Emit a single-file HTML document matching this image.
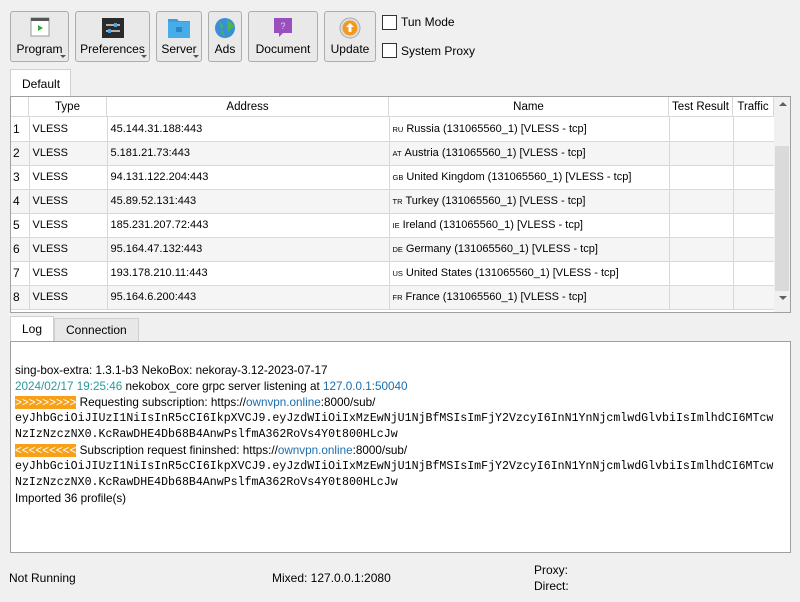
<!DOCTYPE html><html><head><style>
*{box-sizing:border-box;margin:0;padding:0}
body{width:800px;height:602px;background:#f0f0f0;font-family:"Liberation Sans",sans-serif;font-size:12px;color:#000;position:relative;overflow:hidden}
.a{position:absolute}
.btn{position:absolute;top:11px;height:51px;border:1px solid #adadad;border-radius:3px;background:#e9e9e9;text-align:center}
.btn .l{position:absolute;bottom:5px;left:0;right:0;font-size:12px}
.btn .ic{position:absolute;top:5px;left:50%;margin-left:-12px;width:24px;height:22px}
.dd{position:absolute;right:2px;bottom:3px;border-left:3px solid transparent;border-right:3px solid transparent;border-top:3px solid #555;width:0;height:0}
.cb{position:absolute;left:382px;width:15px;height:15px;border:1px solid #333;background:#fff}
table{border-collapse:collapse;table-layout:fixed}
td{height:24px;border-right:1px solid #d8d8d8;border-bottom:1px solid #d8d8d8;padding-left:3px;white-space:nowrap;overflow:hidden;font-size:11px}
td.n{padding-left:2px;font-size:12px}
tr:nth-child(even) td{background:#f5f5f5}
.cc{font-size:7.5px;margin-right:3px}
.hdr{position:absolute;top:97px;height:20px;border-right:1px solid #d8d8d8;border-bottom:1px solid #d8d8d8;text-align:center;line-height:20px;background:#fff;font-size:11.5px;white-space:nowrap;overflow:hidden}
.log div{height:16px;line-height:16px;white-space:nowrap;font-size:11.7px}
.log div.mono{font-family:"Liberation Mono",monospace;font-size:11.6px}
.bl{color:#1a6fb0}.tl{color:#2a9a9a}
.or{background:#f7a11a;color:#fff}
</style></head><body>
<div class="btn" style="left:10px;width:59px"><svg class="ic" viewBox="0 0 24 22"><rect x="3" y="1" width="18" height="18" fill="#fff" stroke="#999"/><rect x="3" y="1" width="18" height="3" fill="#555"/><path d="M10 8l5 3-5 3z" fill="#3a3"/></svg><div class="l">Program</div><div class="dd"></div></div>
<div class="btn" style="left:75px;width:75px"><svg class="ic" viewBox="0 0 24 22"><rect x="1" y="1" width="22" height="20" fill="#2b2b2b"/><path d="M5 8h14M5 14h14" stroke="#fff" stroke-width="1.2"/><rect x="13" y="6" width="3" height="4" fill="#4aa3df"/><rect x="7" y="12" width="3" height="4" fill="#4aa3df"/></svg><div class="l">Preferences</div><div class="dd"></div></div>
<div class="btn" style="left:156px;width:46px"><svg class="ic" viewBox="0 0 24 22"><path d="M1 2h9l2 2h11v17H1z" fill="#3a9ee0"/><rect x="1" y="5" width="22" height="16" fill="#47ade8"/><rect x="9" y="10" width="6" height="5" fill="#2a86c7"/></svg><div class="l">Server</div><div class="dd"></div></div>
<div class="btn" style="left:208px;width:34px"><svg class="ic" viewBox="0 0 24 22"><circle cx="12" cy="11" r="10" fill="#3a8fd6"/><path d="M6 5c3 1 5 4 3 7s1 6 3 8M14 2c2 3 6 4 7 8-3 1-5 3-6 6" fill="#4cb848"/></svg><div class="l">Ads</div></div>
<div class="btn" style="left:248px;width:70px"><svg class="ic" viewBox="0 0 24 22"><path d="M3 1h18v15H12l-4 4v-4H3z" fill="#9b4fbf"/><text x="12" y="12" font-size="9" fill="#ddd" text-anchor="middle" font-family="Liberation Sans">?</text></svg><div class="l">Document</div></div>
<div class="btn" style="left:324px;width:52px"><svg class="ic" viewBox="0 0 24 22"><circle cx="12" cy="11" r="10" fill="#ddd" stroke="#aaa"/><circle cx="12" cy="11" r="7.5" fill="#f39a1e"/><path d="M12 6l-4 4h2.5v5h3v-5H16z" fill="#fff"/></svg><div class="l">Update</div></div>
<div class="cb" style="top:15px"></div><div class="a" style="left:401px;top:15px;font-size:12px">Tun Mode</div>
<div class="cb" style="top:43px"></div><div class="a" style="left:401px;top:44px;font-size:12px">System Proxy</div>

<div class="a" style="left:10px;top:69px;width:61px;height:28px;border:1px solid #d0d0d0;border-bottom:none;background:#fff;padding:7px 0 0 11px">Default</div>
<div class="a" style="left:10px;top:96px;width:781px;height:217px;border:1px solid #a0a0a0;background:#fff"></div>
<div class="hdr" style="left:11px;width:18px"></div>
<div class="hdr" style="left:29px;width:78px">Type</div>
<div class="hdr" style="left:107px;width:282px">Address</div>
<div class="hdr" style="left:389px;width:280px">Name</div>
<div class="hdr" style="left:669px;width:64px">Test Result</div>
<div class="hdr" style="left:733px;width:41px">Traffic</div>
<table class="a" style="left:11px;top:117px;width:763px">
<colgroup><col style="width:18px"><col style="width:78px"><col style="width:282px"><col style="width:280px"><col style="width:64px"><col style="width:41px"></colgroup>
<tr><td class="n">1</td><td>VLESS</td><td>45.144.31.188:443</td><td><span class="cc">RU</span>Russia (131065560_1) [VLESS - tcp]</td><td></td><td></td></tr>
<tr><td class="n">2</td><td>VLESS</td><td>5.181.21.73:443</td><td><span class="cc">AT</span>Austria (131065560_1) [VLESS - tcp]</td><td></td><td></td></tr>
<tr><td class="n">3</td><td>VLESS</td><td>94.131.122.204:443</td><td><span class="cc">GB</span>United Kingdom (131065560_1) [VLESS - tcp]</td><td></td><td></td></tr>
<tr><td class="n">4</td><td>VLESS</td><td>45.89.52.131:443</td><td><span class="cc">TR</span>Turkey (131065560_1) [VLESS - tcp]</td><td></td><td></td></tr>
<tr><td class="n">5</td><td>VLESS</td><td>185.231.207.72:443</td><td><span class="cc">IE</span>Ireland (131065560_1) [VLESS - tcp]</td><td></td><td></td></tr>
<tr><td class="n">6</td><td>VLESS</td><td>95.164.47.132:443</td><td><span class="cc">DE</span>Germany (131065560_1) [VLESS - tcp]</td><td></td><td></td></tr>
<tr><td class="n">7</td><td>VLESS</td><td>193.178.210.11:443</td><td><span class="cc">US</span>United States (131065560_1) [VLESS - tcp]</td><td></td><td></td></tr>
<tr><td class="n">8</td><td>VLESS</td><td>95.164.6.200:443</td><td><span class="cc">FR</span>France (131065560_1) [VLESS - tcp]</td><td></td><td></td></tr>
</table>
<div class="a" style="left:774px;top:97px;width:16px;height:215px;background:#f0f0f0"></div>
<div class="a" style="left:775px;top:146px;width:14px;height:145px;background:#dadada"></div>
<div class="a" style="left:779px;top:102px;border-left:4px solid transparent;border-right:4px solid transparent;border-bottom:4px solid #606060"></div>
<div class="a" style="left:779px;top:296px;border-left:4px solid transparent;border-right:4px solid transparent;border-top:4px solid #606060"></div>

<div class="a" style="left:10px;top:316px;width:44px;height:26px;border:1px solid #d0d0d0;border-bottom:none;background:#fff;padding:5px 0 0 11px;font-size:12px">Log</div>
<div class="a" style="left:54px;top:318px;width:85px;height:23px;border:1px solid #d0d0d0;border-bottom:none;background:#e8e8e8;padding:4px 0 0 11px">Connection</div>
<div class="a" style="left:10px;top:341px;width:781px;height:212px;border:1px solid #a0a0a0;background:#fff"></div>
<div class="a log" style="left:15px;top:363px;width:770px;overflow:hidden">
<div>sing-box-extra: 1.3.1-b3 NekoBox: nekoray-3.12-2023-07-17</div>
<div><span class="tl">2024/02/17 19:25:46</span> nekobox_core grpc server listening at <span class="bl">127.0.0.1:50040</span></div>
<div><span class="or">&gt;&gt;&gt;&gt;&gt;&gt;&gt;&gt;&gt;</span> Requesting subscription: https://<span class="bl">ownvpn.online</span>:8000/sub/</div>
<div class="mono">eyJhbGciOiJIUzI1NiIsInR5cCI6IkpXVCJ9.eyJzdWIiOiIxMzEwNjU1NjBfMSIsImFjY2VzcyI6InN1YnNjcmlwdGlvbiIsImlhdCI6MTcw</div>
<div class="mono">NzIzNzczNX0.KcRawDHE4Db68B4AnwPslfmA362RoVs4Y0t800HLcJw</div>
<div><span class="or">&lt;&lt;&lt;&lt;&lt;&lt;&lt;&lt;&lt;</span> Subscription request fininshed: https://<span class="bl">ownvpn.online</span>:8000/sub/</div>
<div class="mono">eyJhbGciOiJIUzI1NiIsInR5cCI6IkpXVCJ9.eyJzdWIiOiIxMzEwNjU1NjBfMSIsImFjY2VzcyI6InN1YnNjcmlwdGlvbiIsImlhdCI6MTcw</div>
<div class="mono">NzIzNzczNX0.KcRawDHE4Db68B4AnwPslfmA362RoVs4Y0t800HLcJw</div>
<div>Imported 36 profile(s)</div>
</div>

<div class="a" style="left:9px;top:571px">Not Running</div>
<div class="a" style="left:272px;top:571px">Mixed: 127.0.0.1:2080</div>
<div class="a" style="left:534px;top:563px">Proxy:</div>
<div class="a" style="left:534px;top:579px">Direct:</div>
</body></html>
